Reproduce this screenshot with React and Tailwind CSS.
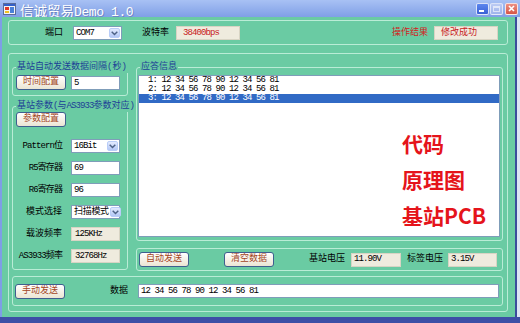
import React from 'react';

const rows = [
  '1: 12 34 56 78 90 12 34 56 81',
  '2: 12 34 56 78 90 12 34 56 81',
  '3: 12 34 56 78 90 12 34 56 81',
];

function Btn({ children, className = '' }) {
  return (
    <div className={`flex items-center justify-center h-[15px] w-[50px] rounded-[3px] border border-[#3f5f8f] bg-linear-to-b from-white to-[#ebe5d3] text-[9px] leading-none text-[#a3461e] ${className}`}>
      {children}
    </div>
  );
}

function Box({ children, className = '', ro = false, red = false }) {
  return (
    <div
      className={`flex items-center h-[14px] px-[2px] border text-[9px] leading-none whitespace-pre tracking-[-0.9px] ${
        ro ? 'bg-[#efebde] border-[#d8d4c4]' : 'bg-white border-[#7f9db9]'
      } ${red ? 'text-[#c8201c]' : 'text-black'} ${className}`}
    >
      {children}
    </div>
  );
}

function Combo({ children, className = '', text = 'tracking-[-0.9px]' }) {
  return (
    <div className={`flex h-[14px] bg-white border border-[#7f9db9] ${className}`}>
      <div className={`flex-1 flex items-center pl-[2px] text-[9px] leading-none whitespace-nowrap ${text}`}>
        {children}
      </div>
      <div className="w-[11px] shrink-0 m-px rounded-[2px] border border-[#b9cdf8] bg-linear-to-b from-[#e3ebfe] to-[#b3c7f5] flex items-center justify-center">
        <svg width="7" height="5" viewBox="0 0 7 5">
          <path d="M0.7 0.7 L3.5 3.6 L6.3 0.7" stroke="#4d6185" strokeWidth="1.4" fill="none" />
        </svg>
      </div>
    </div>
  );
}

function Group({ label, className = '', children }) {
  return (
    <fieldset className={`border border-[#b9ecd6] rounded-[3px] min-w-0 ${className}`}>
      <legend className="ml-[3px] px-[1px] text-[9px] leading-[12px] text-[#1d3f96] whitespace-nowrap">{label}</legend>
      {children}
    </fieldset>
  );
}

function Row({ label, children }) {
  return (
    <div className="flex items-center h-[14px]">
      <span className="w-[49px] text-right text-[9px] leading-none whitespace-nowrap">{label}</span>
      <div className="ml-[9px]">{children}</div>
    </div>
  );
}

const Lat = ({ children }) => <span className="tracking-[-0.9px]">{children}</span>;

export default function App() {
  return (
    <div className='w-[520px] h-[323px] overflow-hidden flex flex-col bg-[#dfe6f5] text-black font-[family-name:"Liberation_Mono","Noto_Sans_CJK_SC",monospace]'>
      {/* title bar */}
      <div className="h-[17px] flex items-center bg-linear-to-b from-[#a8c1f4] to-[#809fe6]">
        <svg className="ml-[3px]" width="13" height="12" viewBox="0 0 13 12">
          <rect x="0.5" y="0.5" width="12" height="11" fill="#f4f4f4" stroke="#5b6b9a" />
          <rect x="1" y="1" width="11" height="2" fill="#3560c8" />
          <rect x="2" y="4" width="4" height="3" fill="#e03a2a" />
          <rect x="2" y="8" width="4" height="2" fill="#f0c020" />
          <rect x="7" y="4" width="4" height="6" fill="#4a80d8" />
        </svg>
        <span className='ml-[4px] self-start text-[13.5px] leading-[20px] -mt-px pt-px text-white [text-shadow:1px_1px_0_#6d86c4] whitespace-nowrap font-[family-name:"Noto_Sans_CJK_SC",sans-serif]'>
          信诚贸易
          <span className='text-[13px] tracking-[-0.4px] font-[family-name:"Liberation_Mono",monospace]'>Demo 1.0</span>
        </span>
        <div className="flex-1" />
        <div className="flex items-center gap-px mr-[2px]">
          <div className="w-[13px] h-[12px] rounded-[2px] border border-white/80 bg-linear-to-b from-[#5c86ee] to-[#3a60d4] flex items-end pl-[2px] pb-[2px]">
            <div className="w-[5px] h-[2px] bg-white" />
          </div>
          <div className="w-[13px] h-[12px] rounded-[2px] border border-white/60 bg-linear-to-b from-[#bccbf3] to-[#9fb4ec] flex items-center justify-center">
            <div className="w-[7px] h-[6px] border border-white/60 border-t-2" />
          </div>
          <div className="ml-px w-[13px] h-[12px] rounded-[2px] border border-white/80 bg-linear-to-b from-[#ec8f82] to-[#d65446] flex items-center justify-center">
            <svg width="7" height="7" viewBox="0 0 7 7">
              <path d="M1 1 L6 6 M6 1 L1 6" stroke="white" strokeWidth="1.6" />
            </svg>
          </div>
        </div>
      </div>

      {/* body */}
      <div className="flex h-[300px]">
        <div className="w-[2px] bg-[#7e9ee6]" />
        <div className="w-[513px] bg-[#6acba3] flex flex-col pl-[6px]">
          {/* top group */}
          <div className="mt-[3px] w-[500px] h-[25px] border border-[#b9ecd6] rounded-[3px] flex items-start pt-[5px] pl-[36px] pr-[9px]">
            <span className="text-[9px] leading-[14px]">端口</span>
            <Combo className="ml-[10px] w-[49px]">COM7</Combo>
            <span className="ml-[20px] text-[9px] leading-[14px]">波特率</span>
            <Box ro red className="ml-[7px] w-[64px] pl-[6px]">38400bps</Box>
            <div className="flex-1" />
            <span className="text-[9px] leading-[14px] text-[#d42020]">操作结果</span>
            <Box ro red className="ml-[6px] w-[64px] pl-[6px] tracking-normal">修改成功</Box>
          </div>

          {/* main group */}
          <div className="mt-[8px] w-[500px] h-[259px] border border-[#b9ecd6] rounded-[3px] pt-[7px] pl-[3px] pr-[4px] flex flex-col">
            <div className="flex gap-[8px] h-[210px]">
              {/* left column */}
              <div className="w-[116px] flex flex-col">
                <Group label="基站自动发送数据间隔(秒)" className="h-[35px]">
                  <div className="flex items-start gap-[5px] pl-[3px] pt-[2px]">
                    <Btn>时间配置</Btn>
                    <Box className="mt-px w-[49px]">5</Box>
                  </div>
                </Group>
                <Group
                  label={<>基站参数<Lat>(</Lat>与<Lat>AS3933</Lat>参数对应<Lat>)</Lat></>}
                  className="mt-[4px] h-[170px]"
                >
                  <div className="flex flex-col pl-[3px]">
                    <Btn>参数配置</Btn>
                  </div>
                  <div className="mt-[12px] flex flex-col gap-[8px]">
                    <Row label={<Lat>Pattern位</Lat>}>
                      <Combo className="w-[49px]">16Bit</Combo>
                    </Row>
                    <Row label={<Lat>R5寄存器</Lat>}>
                      <Box className="w-[49px]">69</Box>
                    </Row>
                    <Row label={<Lat>R6寄存器</Lat>}>
                      <Box className="w-[49px]">96</Box>
                    </Row>
                    <Row label="模式选择">
                      <Combo className="w-[49px]" text="tracking-[-0.3px]">扫描模式</Combo>
                    </Row>
                    <Row label="载波频率">
                      <Box ro className="w-[49px] pl-[3px]">125KHz</Box>
                    </Row>
                    <Row label={<Lat>AS3933频率</Lat>}>
                      <Box ro className="w-[49px] pl-[3px]">32768Hz</Box>
                    </Row>
                  </div>
                </Group>
              </div>

              {/* right column */}
              <div className="w-[367px] flex flex-col">
                <Group label="应答信息" className="h-[180px]">
                  <div className="pt-[2px] pl-[1px] pr-[2px]">
                    <div className="h-[162px] bg-white border border-[#7f9db9] flex flex-col">
                      {rows.map((r, i) => (
                        <div
                          key={r + i}
                          className={`h-[9px] leading-[9px] pl-[9px] text-[9px] tracking-[-0.9px] whitespace-pre ${
                            i === 2 ? 'bg-[#316ac5] text-white' : 'text-black'
                          }`}
                        >
                          {r}
                        </div>
                      ))}
                      <div className='mt-[22px] pl-[263px] flex flex-col text-[21px] leading-[36px] font-bold text-[#e5141b] font-[family-name:"Noto_Sans_CJK_SC",sans-serif]'>
                        <span>代码</span>
                        <span>原理图</span>
                        <span>基站PCB</span>
                      </div>
                    </div>
                  </div>
                </Group>
                <div className="mt-[7px] h-[23px] border border-[#b9ecd6] rounded-[3px] flex items-center pl-[2px]">
                  <Btn>自动发送</Btn>
                  <Btn className="ml-[35px]">清空数据</Btn>
                  <span className="ml-[35px] text-[9px] leading-none">基站电压</span>
                  <Box ro className="ml-[6px] w-[50px]">11.90V</Box>
                  <span className="ml-[6px] text-[9px] leading-none">标签电压</span>
                  <Box ro className="ml-[5px] w-[49px]">3.15V</Box>
                </div>
              </div>
            </div>

            {/* data group */}
            <div className="mt-[5px] w-[491px] h-[30px] border border-[#b9ecd6] rounded-[3px] flex items-center pl-[2px]">
              <Btn>手动发送</Btn>
              <span className="ml-[45px] text-[9px] leading-none">数据</span>
              <Box className="ml-[10px] w-[361px]">12 34 56 78 90 12 34 56 81</Box>
            </div>
          </div>
        </div>
        <div className="w-[2px] bg-[#3b4c9c]" />
        <div className="w-[3px] bg-[#dde5f4]" />
      </div>
      <div className="h-[6px] bg-[#3d4fa6]" />
    </div>
  );
}
